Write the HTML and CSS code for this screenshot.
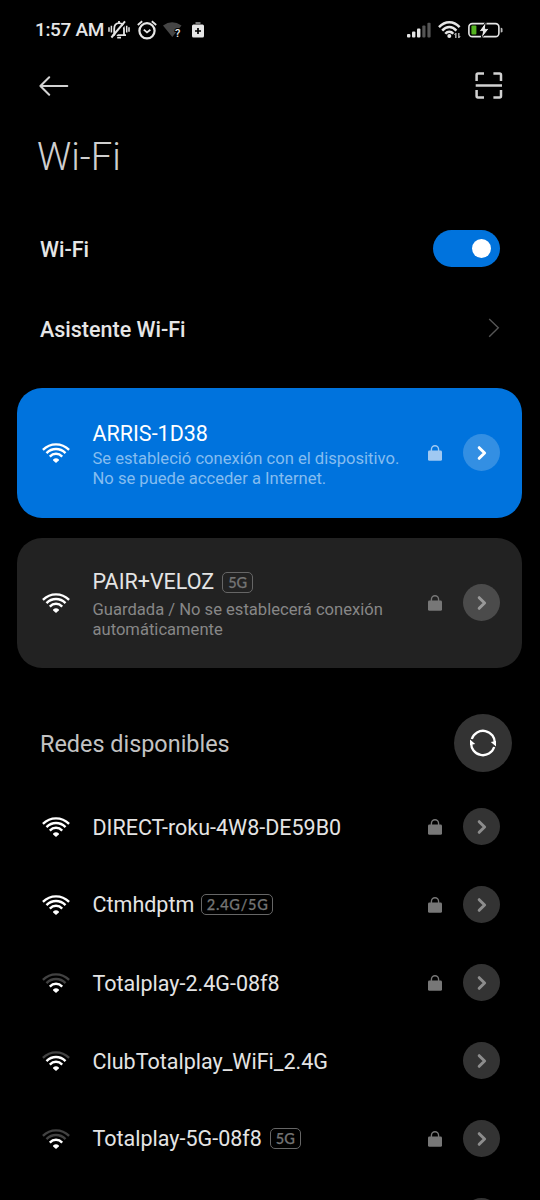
FILE: index.html
```html
<!DOCTYPE html>
<html lang="es">
<head>
<meta charset="utf-8">
<title>Wi-Fi</title>
<link rel="stylesheet" href="styles.css">
</head>
<body>
<svg class="sprite" aria-hidden="true">
  <symbol id="wifi" viewBox="0 0 28 20">
    <g fill="none" stroke="currentColor" stroke-width="2.4">
      <path class="arc-outer" d="M.9 6.9Q6.6 1.4 14 1.4T27.1 6.9"/>
      <path class="arc-middle" d="M4.5 10.1Q8.6 6 14 6T23.5 10.1"/>
      <path d="M7.8 13.6Q10.5 10.8 14 10.8T20.2 13.6"/>
    </g>
    <path d="M11.1 16.6Q14 14.1 16.9 16.6Q17.2 17 16.8 17.4L14.6 19.4Q14 19.9 13.4 19.4L11.2 17.4Q10.8 17 11.1 16.6Z" fill="currentColor"/>
  </symbol>
  <symbol id="lock" viewBox="0 0 14 16">
    <path d="M3.4 6V4.4a3.6 3.6 0 0 1 7.2 0V6" fill="none" stroke="currentColor" stroke-width="1.4"/>
    <rect y="5.6" width="14" height="10.2" rx="1.4" fill="currentColor"/>
  </symbol>
  <symbol id="chevron" viewBox="0 0 10 16">
    <path d="M2.2 2.7L7.6 8L2.2 13.3" fill="none" stroke="currentColor" stroke-width="3" stroke-linecap="round" stroke-linejoin="round"/>
  </symbol>
</svg>
<div class="screen">
  <header class="status">
    <span class="clock">1:57 AM</span>
    <svg class="bell" viewBox="0 0 22 20" fill="none" stroke="currentColor" stroke-width="1.8">
      <path d="M4.5 15.2H18M6.2 15V9Q6.2 3.2 11 3.2T16 9V15M9.2 17.6H13"/>
      <path d="M11 1V3"/>
      <path d="M1 7.2V11.8M3.4 5.8V12.5M18.7 5.8V12.5M21 7.2V11.8" stroke-width="1.5"/>
      <path d="M5.2 18.4L18.4 2.6" stroke="#000" stroke-width="1.6"/>
      <path d="M3.4 17.5L17 1.4" stroke-width="2"/>
    </svg>
    <svg class="alarm" viewBox="0 0 20 20" fill="none" stroke="currentColor" stroke-width="2.2">
      <circle cx="10" cy="10.8" r="7.6"/>
      <path d="M.8 5L5.2 1.3M19.2 5L14.8 1.3M6.8 9.6L10 12.4L13.4 9.8" stroke-width="1.8"/>
    </svg>
    <svg class="wifi-unknown" viewBox="0 0 20 16">
      <path d="M0 3.5Q9-3 18.5 3.5L9.3 15Z" fill="#454545"/>
      <text x="12" y="15.2" class="query">?</text>
    </svg>
    <svg class="saver" viewBox="0 0 12 16">
      <path d="M3.5 0H8.5V2H3.5Z" fill="#777"/>
      <rect y="2.4" width="12" height="13.2" rx="1.5" fill="currentColor"/>
      <path d="M6 6V12M3 9H9" stroke="#000" stroke-width="1.7"/>
    </svg>
    <svg class="signal" viewBox="0 0 24 16" fill="currentColor">
      <rect y="12" width="3.4" height="3.6" rx="1"/><rect x="5" y="9.4" width="3.4" height="6.2" rx="1"/><rect x="10" y="6.6" width="3.4" height="9" rx="1"/>
      <g fill="#555"><rect x="15.3" y="3.6" width="3.2" height="12" rx="1"/><rect x="20.4" y="0.8" width="3.2" height="14.8" rx="1"/></g>
    </svg>
    <svg class="wifi-status" viewBox="0 0 23 18">
      <g fill="none" stroke="currentColor" stroke-width="2.5">
        <path d="M1 6.2Q5.6 1.3 11.3 1.3T21.6 6.2M4.2 9.6Q7.4 6.1 11.3 6.1T18.4 9.6M7.3 12.8Q9 10.8 11.3 10.8T15.3 12.8"/>
      </g>
      <circle cx="11.3" cy="14.9" r="2"/>
      <path d="M17.8 12V17M20.8 12V17" stroke="#aaa" stroke-width="1.5"/><path d="M15.8 13.8L17.8 11.8V14ZM22.8 15.2L20.8 17.2V15Z" fill="#aaa"/>
    </svg>
    <svg class="battery" viewBox="0 0 35 16">
      <rect x=".9" y="1.6" width="30" height="13" rx="3.4" fill="none" stroke="currentColor" stroke-width="1.6"/>
      <rect x="3.4" y="3.6" width="5" height="9" rx="1" fill="#54b320"/>
      <path d="M32.7 5.7Q34.5 5.7 34.5 7V9.2Q34.5 10.5 32.7 10.5Z" fill="#bbb"/>
      <path d="M18.2-.6L11 9.4H14.6L13 17L21.2 6.6H17.4Z" fill="currentColor" stroke="#000" stroke-width="1"/>
    </svg>
  </header>

  <nav class="toolbar">
    <svg class="back" viewBox="0 0 30 20" fill="none" stroke="currentColor" stroke-width="2" stroke-linecap="round" stroke-linejoin="round"><path d="M10.2 1.2L1.4 10L10.2 18.8M1.4 10H28.3"/></svg>
    <svg class="scan" viewBox="0 0 28 27" fill="none" stroke="currentColor" stroke-width="2.5"><path d="M1.6 9V3Q1.6 1.6 3 1.6H9M18.4 1.6H24.6Q26 1.6 26 3V9M1.6 18V24Q1.6 25.4 3 25.4H9M18.4 25.4H24.6Q26 25.4 26 24V18M.7 13.4H27"/></svg>
  </nav>

  <h1 class="title">Wi-Fi</h1>

  <div class="setting"><span class="label">Wi-Fi</span><span class="toggle"><i class="knob"></i></span></div>
  <div class="setting"><span class="label">Asistente Wi-Fi</span><svg class="more" viewBox="0 0 12 20" fill="none" stroke="currentColor" stroke-width="1.4"><path d="M1.2 1L10.3 9.8L1.2 18.8"/></svg></div>

  <section class="card card-active">
    <svg class="wifi"><use href="#wifi"/></svg>
    <div class="info">
      <div class="name">ARRIS-1D38</div>
      <p class="detail">Se estableció conexión con el dispositivo.<br>No se puede acceder a Internet.</p>
    </div>
    <svg class="lock"><use href="#lock"/></svg>
    <span class="go"><svg><use href="#chevron"/></svg></span>
  </section>
  <section class="card card-saved">
    <svg class="wifi"><use href="#wifi"/></svg>
    <div class="info">
      <div class="name">PAIR+VELOZ<span class="band">5G</span></div>
      <p class="detail">Guardada / No se establecerá conexión<br>automáticamente</p>
    </div>
    <svg class="lock"><use href="#lock"/></svg>
    <span class="go"><svg><use href="#chevron"/></svg></span>
  </section>

  <div class="section-head">
    <h2 class="section-title">Redes disponibles</h2>
    <span class="refresh"><svg viewBox="0 0 28 28" fill="none" stroke="currentColor" stroke-width="2.3"><path d="M2.8 10A11.8 11.8 0 0 1 25.8 14.6M25.2 18A11.8 11.8 0 0 1 2.2 13.4"/><path d="M21.8 13L27 12V17.6ZM6.2 15L1 16V10.4Z" fill="currentColor" stroke="none"/></svg></span>
  </div>

  <main class="list">
    <div class="row"><svg class="wifi"><use href="#wifi"/></svg><div class="name plain">DIRECT-roku-4W8-DE59B0</div><svg class="lock"><use href="#lock"/></svg><span class="go"><svg><use href="#chevron"/></svg></span></div>
    <div class="row"><svg class="wifi"><use href="#wifi"/></svg><div class="name">Ctmhdptm<span class="band band-dual">2.4G/5G</span></div><svg class="lock"><use href="#lock"/></svg><span class="go"><svg><use href="#chevron"/></svg></span></div>
    <div class="row"><svg class="wifi level-2"><use href="#wifi"/></svg><div class="name plain">Totalplay-2.4G-08f8</div><svg class="lock"><use href="#lock"/></svg><span class="go"><svg><use href="#chevron"/></svg></span></div>
    <div class="row"><svg class="wifi level-3"><use href="#wifi"/></svg><div class="name plain">ClubTotalplay_WiFi_2.4G</div><span class="go"><svg><use href="#chevron"/></svg></span></div>
    <div class="row"><svg class="wifi level-2"><use href="#wifi"/></svg><div class="name">Totalplay-5G-08f8<span class="band">5G</span></div><svg class="lock"><use href="#lock"/></svg><span class="go"><svg><use href="#chevron"/></svg></span></div>
    <div class="row"><div class="name"></div><span class="go"><svg><use href="#chevron"/></svg></span></div>
  </main>
</div>
</body>
</html>
```
FILE: styles.css
```css
* { box-sizing: border-box; }
body { margin: 0; background: #000; color: #e4e4e4; font-family: Roboto, sans-serif; }
svg { display: block; flex: none; }
.sprite { display: none; }
.screen { height: 1200px; overflow: hidden; display: flex; flex-direction: column; }
.screen > * { flex: none; }

.status { height: 60px; padding: 0 37px 0 35px; display: flex; align-items: center; color: #e6e6e6; }
.clock { font-size: 19px; font-weight: 500; line-height: 24px; width: 73px; letter-spacing: -.35px; white-space: nowrap; }
.bell { width: 22px; height: 20px; }
.alarm { width: 20px; height: 20px; margin-left: 7px; }
.wifi-unknown { width: 20px; height: 16px; margin-left: 6px; overflow: visible; }
.query { font: 500 11px Roboto, sans-serif; fill: #eee; stroke: #000; stroke-width: 2px; paint-order: stroke; }
.saver { width: 12px; height: 16px; margin-left: 9px; }
.signal { width: 24px; height: 16px; margin-left: auto; }
.wifi-status { width: 23px; height: 18px; margin-left: 7px; fill: currentColor; }
.battery { width: 35px; height: 16px; margin-left: 7px; overflow: visible; }

.toolbar { height: 52px; padding: 0 37px 0 39px; display: flex; justify-content: space-between; align-items: center; color: #d2d2d2; }
.back { width: 30px; height: 20px; }
.scan { width: 28px; height: 27px; margin-bottom: 2px; }
.title { margin: 0; padding: 22px 0 0 37px; height: 96px; font-size: 38.2px; line-height: 46px; font-weight: 300; color: #cfcfcf; }

.setting { height: 80px; padding: 0 40px; display: flex; justify-content: space-between; align-items: center; font-size: 21.5px; font-weight: 500; color: #e6e6e6; }
.label { padding-top: 2px; }
.toggle { width: 67px; height: 37px; border-radius: 19px; background: #0073dd; padding: 0 9px; display: flex; align-items: center; justify-content: flex-end; }
.knob { width: 19px; height: 19px; border-radius: 50%; background: #fff; }
.more { width: 12px; height: 20px; color: #555; }

.card { height: 130px; margin: 19.5px 18px 0 17px; padding: 0 22px 0 24.5px; border-radius: 25px; display: flex; align-items: center; }
.card + .card { margin-top: 20px; }
.card-active { background: #0073dd; color: #fff; }
.card-saved { background: #222; }
.wifi { width: 28px; height: 20px; color: #fff; }
.level-2, .level-3 { --outer: .26; }
.level-2 { --middle: .26; }
.arc-outer { opacity: var(--outer, 1); }
.arc-middle { opacity: var(--middle, 1); }
.info { flex: 1; margin-left: 23px; padding-top: 4px; white-space: nowrap; }
.name { font-size: 21.5px; line-height: 26px; display: flex; align-items: center; white-space: nowrap; }
.detail { margin: 5px 0 0; font-size: 16.58px; line-height: 20px; color: #878787; }
.card-active .detail { color: #85bdf0; margin-top: 2px; }
.lock { width: 14px; height: 16px; margin-right: 21px; color: #777; }
.card-active .lock { color: #a0c9f2; }
.go { width: 37px; height: 37px; flex: none; border-radius: 50%; background: #333; color: #8d8d8d; display: flex; align-items: center; justify-content: center; }
.go svg { width: 10px; height: 16px; }
.card-active .go { background: #338fe3; color: #fff; }
.card-saved .go { background: #4b4b4b; color: #999; }
.band { height: 21px; margin-left: 8px; padding: 0 5px; border: 1.5px solid #666; border-radius: 5px; font: 500 14.5px/19px Lato, sans-serif; color: #747474; -webkit-text-stroke: .25px #747474; }
.band-dual { margin-left: 6.5px; padding-right: 4px; letter-spacing: .75px; }

.section-head { height: 120px; padding: 30px 28px 0 40px; display: flex; justify-content: space-between; align-items: center; }
.section-title { margin: 0; padding-top: 2px; font-size: 23.4px; font-weight: 400; color: #c3c3c3; }
.refresh { width: 58px; height: 58px; border-radius: 50%; background: #333; color: #fff; display: flex; align-items: center; justify-content: center; }
.refresh svg { width: 28px; height: 28px; }
.row { height: 78px; padding: 0 40px 0 41.5px; display: flex; align-items: center; }
.row .name { flex: 1; margin-left: 23px; }
.row .plain { padding-top: 2px; }
```
